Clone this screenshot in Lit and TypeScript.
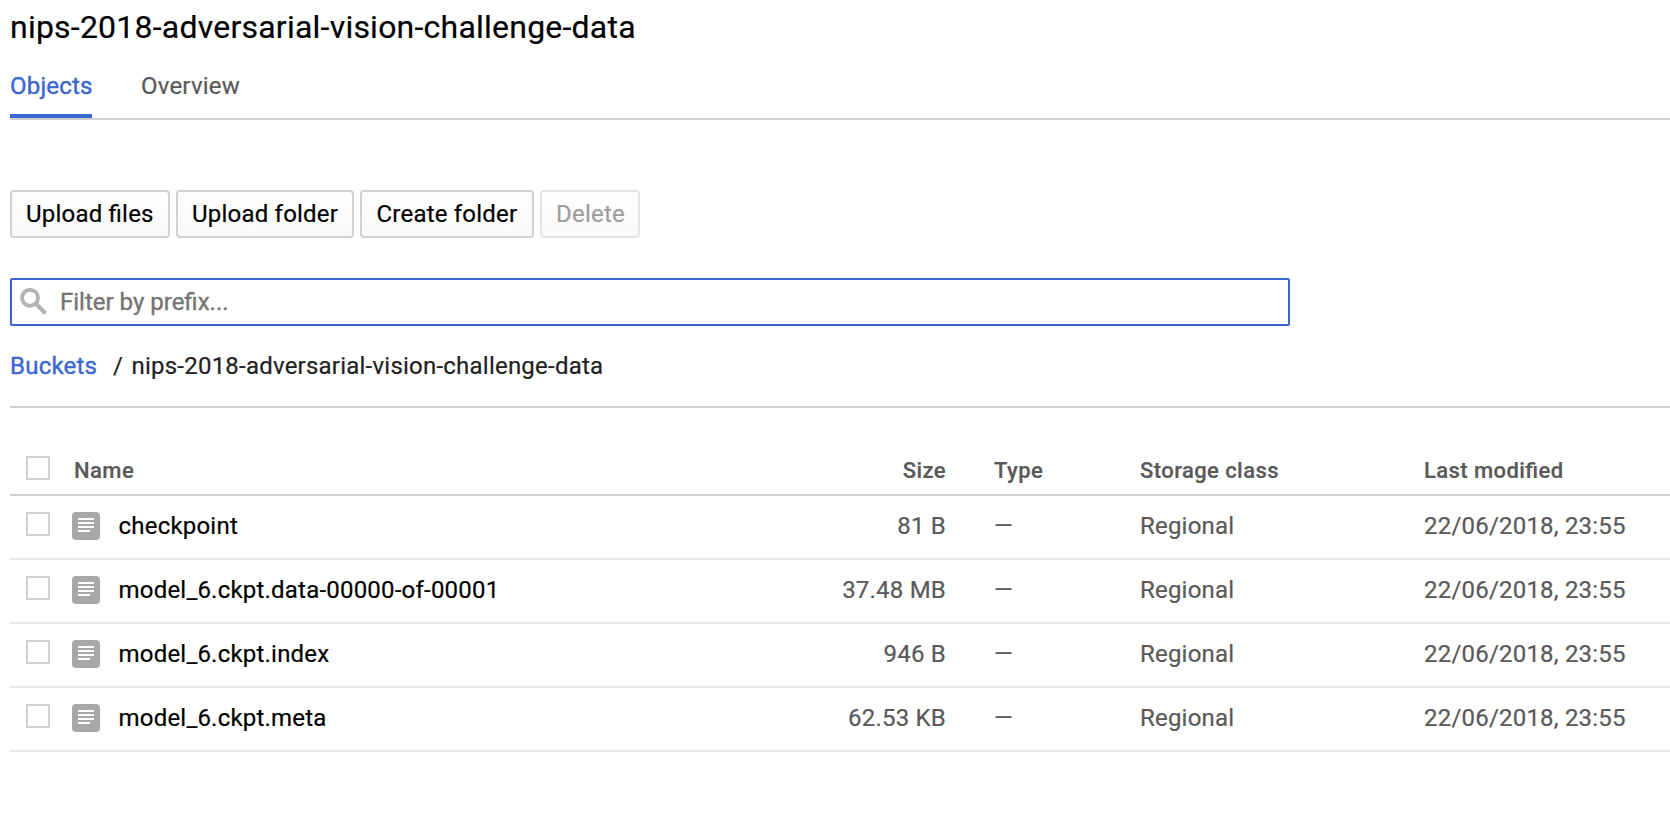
import { LitElement, html, css, svg } from "lit";
import { customElement } from "lit/decorators.js";

interface StorageObject {
  name: string;
  size: string;
  storageClass: string;
  modified: string;
}

const BUCKET = "nips-2018-adversarial-vision-challenge-data";

const OBJECTS: StorageObject[] = [
  { name: "checkpoint", size: "81 B", storageClass: "Regional", modified: "22/06/2018, 23:55" },
  { name: "model_6.ckpt.data-00000-of-00001", size: "37.48 MB", storageClass: "Regional", modified: "22/06/2018, 23:55" },
  { name: "model_6.ckpt.index", size: "946 B", storageClass: "Regional", modified: "22/06/2018, 23:55" },
  { name: "model_6.ckpt.meta", size: "62.53 KB", storageClass: "Regional", modified: "22/06/2018, 23:55" },
];

const searchIcon = svg`<circle cx="10" cy="9.8" r="8" fill="none" stroke="#b3b3b3" stroke-width="3.8"/><path d="M15.5 15.3 L25.6 25.4" stroke="#b3b3b3" stroke-width="4.2"/>`;

@customElement("app-root")
export class AppRoot extends LitElement {
  static styles = css`
    :host { display: block; height: 838px; overflow: hidden; background: #fff; color: #000; font: 24px/32px Roboto, sans-serif; letter-spacing: 0.21px; font-feature-settings: "liga" 1; -webkit-text-stroke: 0.2px; white-space: nowrap; }
    * { box-sizing: border-box; }
    .page { padding-left: 10px; }
    h1 { margin: 0; padding-top: 7px; height: 60px; font-size: 32px; line-height: 40px; font-weight: 400; letter-spacing: 0.225px; }
    .tabs { display: flex; gap: 49px; height: 60px; border-bottom: 2px solid #d1d1d1; color: #595959; }
    .tab { height: 58px; padding-top: 10px; }
    .active { width: 82px; letter-spacing: 0.2px; color: #3b67d1; border-bottom: 4px solid #3b67d1; -webkit-text-stroke: 0.4px; }
    .actions { display: flex; gap: 6px; padding-top: 70px; }
    .btn { display: block; height: 48px; padding: 0 0 0 14px; border: 2px solid #d1d1d1; border-radius: 4px; background: linear-gradient(#fff, #f9f9f9); font: inherit; letter-spacing: inherit; color: #000; text-align: left; }
    .files { width: 160px; } .folder { width: 178px; } .create { width: 174px; padding-left: 14.5px; }
    .delete { width: 100px; color: #9c9c9c; border-color: #e4e4e4; }
    .filter { display: flex; width: 1280px; height: 48px; margin-top: 40px; border: 2px solid #3b67d1; border-radius: 2px; padding: 6px 0 0 8px; color: #757575; letter-spacing: 0; -webkit-text-stroke: 0.4px; }
    .search { width: 28px; height: 28px; margin: 2px 12px 0 0; }
    .crumbs { display: flex; height: 82px; padding-top: 24px; border-bottom: 2px solid #d1d1d1; color: #212121; letter-spacing: 0.225px; }
    .link { color: #3b67d1; width: 103px; -webkit-text-stroke: 0.4px; }
    .sep { width: 18.5px; }
    .row { display: grid; grid-template-columns: 62px 650px 224px 48px 146px 284px 1fr; height: 64px; border-bottom: 2px solid #e9e9e9; color: #595959; padding-top: 14px; }
    .head { height: 88px; padding-top: 47px; border-color: #d1d1d1; font-weight: 500; font-size: 22px; letter-spacing: 0.42px; }
    .box { width: 24px; height: 24px; border: 2px solid #d1d1d1; margin: 2px 0 0 16px; }
    .head .box { margin-top: 1px; }
    .name { display: flex; gap: 18.5px; color: #000; }
    .head .name { color: inherit; padding-left: 2px; }
    .doc { width: 28px; height: 28px; margin-top: 2px; }
    .size { text-align: right; }
    .type { grid-column: 5; }
  `;

  render() {
    return html`
      <div class="page">
        <h1>${BUCKET}</h1>
        <nav class="tabs"><div class="tab active">Objects</div><div class="tab">Overview</div></nav>
        <div class="actions">
          <button class="btn files">Upload files</button><button class="btn folder">Upload folder</button>
          <button class="btn create">Create folder</button><button class="btn delete">Delete</button>
        </div>
        <div class="filter"><svg class="search" viewBox="0 0 28 28">${searchIcon}</svg><span>Filter by prefix...</span></div>
        <div class="crumbs"><span class="link">Buckets</span><span class="sep">/</span><span>${BUCKET}</span></div>
        <div class="row head"><span class="box"></span><span class="name">Name</span><span class="size">Size</span><span class="type">Type</span><span>Storage class</span><span>Last modified</span></div>
        ${OBJECTS.map((o) => html`<div class="row"><span class="box"></span>
          <span class="name"><svg class="doc" viewBox="0 0 28 28"><rect width="28" height="28" rx="4" fill="#a8a8a8"/><path d="M6 7h16M6 11h16M6 15h16M6 19h12" stroke="#fff" stroke-width="2"/></svg>${o.name}</span>
          <span class="size">${o.size}</span><span class="type">—</span><span>${o.storageClass}</span><span>${o.modified}</span></div>`)}
      </div>`;
  }
}
